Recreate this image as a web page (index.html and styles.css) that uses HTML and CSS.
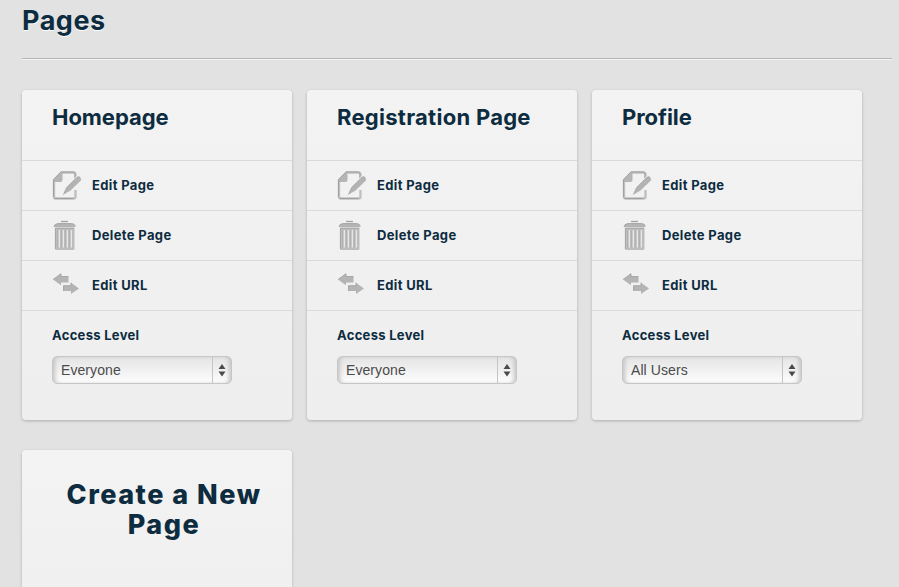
FILE: index.html
```html
<!DOCTYPE html>
<html lang="en">
<head>
<meta charset="utf-8">
<title>Pages</title>
<link rel="stylesheet" href="styles.css">
</head>
<body>
<svg class="sprite" aria-hidden="true">
  <symbol id="edit" viewBox="0 0 30 32">
    <path d="M23.500 10V4.500q0-2-2-2H9.500L2 10v16.500q0 2 2 2h17.500q2 0 2-2V20" fill="none" stroke="#c0c0c0" stroke-width="2.400"/>
    <path d="M23 9V4q0-2-2-2H9L1.500 9.500V27M2.500 28.500h19" fill="none" stroke="#a0a0a0" stroke-width="1"/>
    <path d="M9 2.500 2 9.500V12h6.500q2 0 2-2V2.500z" fill="#b5b5b5"/>
    <path d="m11.500 24.500 3.200-7L25 7.300q1.500-1.200 3.200.2 1.700 1.700.4 3.300L18.500 20.500z" fill="#b3b3b3" stroke="#f0f0f0" stroke-width="2.400" paint-order="stroke"/>
    <path d="m11.500 24.500 3.200-7L25 7.300q1.500-1.200 3.200.2" fill="none" stroke="#9d9d9d" stroke-width=".8"/>
  </symbol>
  <symbol id="trash" viewBox="0 0 30 32">
    <path d="M9 1.500h7" stroke="#a3a3a3" stroke-width="1.300"/>
    <path d="M2 7q0-3 4-3.500h13.500q4 .5 4 3.500z" fill="#b4b4b4"/>
    <path d="M2 7q0-3 4-3.500h13.500q3 .3 3.800 2" fill="none" stroke="#9f9f9f" stroke-width=".8"/>
    <path d="M3 7.800h19.500v20.700q0 1.500-1.500 1.500H4.500Q3 30 3 28.500z" fill="#bdbdbd"/>
    <path d="M3.400 29V8.200h18.700" fill="none" stroke="#a0a0a0" stroke-width=".8"/>
    <path d="M7.100 10v17.500M11.100 10v17.500M15.100 10v17.500M19.100 10v17.500" stroke="#ececec" stroke-width="1.600"/>
    <path d="M6 10v17.500M10 10v17.500M14 10v17.500M18 10v17.500" stroke="#999" stroke-width=".6"/>
  </symbol>
  <symbol id="swap" viewBox="0 0 30 32">
    <path d="m1 9.500 8-5.800V6.500h7.500v6H9v2.800zM11.500 15.700h7.500v-3l8 5.800-8 5.500v-3h-7.500z" fill="#b4b4b4"/>
    <path d="m1 9.500 8-5.800V6.500h7.500M11.500 21V15.700h7.500v-3" fill="none" stroke="#9d9d9d" stroke-width=".8"/>
  </symbol>
</svg>
<h1 class="title">Pages</h1>
<main class="grid">
  <section class="card">
    <h2 class="name">Homepage</h2>
    <a class="row"><svg class="icon"><use href="#edit"/></svg><span>Edit Page</span></a>
    <a class="row"><svg class="icon"><use href="#trash"/></svg><span>Delete Page</span></a>
    <a class="row"><svg class="icon"><use href="#swap"/></svg><span>Edit URL</span></a>
    <div class="access"><div class="label">Access Level</div><div class="select"><span class="value">Everyone</span><svg class="arrows" viewBox="0 0 18 26"><path d="m5.500 12 3.500-5 3.500 5zM5.500 14.500h7l-3.500 5z"/></svg></div></div>
  </section>
  <section class="card">
    <h2 class="name wide">Registration Page</h2>
    <a class="row"><svg class="icon"><use href="#edit"/></svg><span>Edit Page</span></a>
    <a class="row"><svg class="icon"><use href="#trash"/></svg><span>Delete Page</span></a>
    <a class="row"><svg class="icon"><use href="#swap"/></svg><span>Edit URL</span></a>
    <div class="access"><div class="label">Access Level</div><div class="select"><span class="value">Everyone</span><svg class="arrows" viewBox="0 0 18 26"><path d="m5.500 12 3.500-5 3.500 5zM5.500 14.500h7l-3.500 5z"/></svg></div></div>
  </section>
  <section class="card">
    <h2 class="name">Profile</h2>
    <a class="row"><svg class="icon"><use href="#edit"/></svg><span>Edit Page</span></a>
    <a class="row"><svg class="icon"><use href="#trash"/></svg><span>Delete Page</span></a>
    <a class="row"><svg class="icon"><use href="#swap"/></svg><span>Edit URL</span></a>
    <div class="access"><div class="label">Access Level</div><div class="select"><span class="value">All Users</span><svg class="arrows" viewBox="0 0 18 26"><path d="m5.500 12 3.500-5 3.500 5zM5.500 14.500h7l-3.500 5z"/></svg></div></div>
  </section>
  <section class="card create"><h2>Create a New Page</h2></section>
</main>
</body>
</html>
```
FILE: styles.css
```css
* { box-sizing: border-box; }
body {
  margin: 0;
  height: 587px;
  overflow: hidden;
  padding: 0 7px 0 22px;
  background: #e2e2e2;
  color: #0d2c40;
  font-family: Inter, Roboto, "Liberation Sans", sans-serif;
  font-weight: 700;
}
h1, h2 { margin: 0; }
.sprite { display: none; }
.title {
  height: 59px;
  padding-top: 3px;
  border-bottom: 1px solid #b7b7b7;
  box-shadow: 0 1px 0 #f4f4f4;
  font-size: 27px;
  line-height: 36px;
  letter-spacing: .5px;
  text-shadow: 0 1px 0 #fff;
}
.grid {
  display: grid;
  grid-template-columns: repeat(3, 270px);
  gap: 30px 15px;
  padding-top: 31px;
}
.card {
  height: 330px;
  border-radius: 4px;
  background: linear-gradient(#f3f3f3, #eee);
  box-shadow: 0 1px 3px rgba(0, 0, 0, .24);
}
.name {
  height: 70px;
  padding: 12px 0 0 30px;
  font-size: 22px;
  line-height: 30px;
  letter-spacing: -.05px;
}
.name.wide { letter-spacing: .27px; }
.row {
  display: flex;
  align-items: center;
  gap: 10px;
  height: 50px;
  padding-left: 30px;
  border-top: 1px solid #dadada;
  font-size: 13px;
  letter-spacing: .35px;
}
.row span { padding-bottom: 2px; }
.icon { width: 30px; height: 32px; }
.access {
  padding: 15px 30px 0;
  border-top: 1px solid #dadada;
}
.label {
  font-size: 13px;
  line-height: 18px;
  letter-spacing: .3px;
}
.select {
  display: flex;
  width: 180px;
  height: 28px;
  margin-top: 12px;
  border: 1px solid #c6c6c6;
  border-radius: 5px;
  background: linear-gradient(#e4e4e4, #fdfdfd);
  box-shadow: inset 4px 0 4px -2px #c4c4c4, inset -4px 0 4px -2px #c4c4c4;
  color: #4b4b4b;
  font: 14px/26px "Liberation Sans", sans-serif;
  letter-spacing: .08px;
}
.value {
  flex: 1;
  padding-left: 8px;
  border-right: 1px solid #c5c5c5;
}
.arrows {
  width: 18px;
  height: 26px;
  fill: #4b4b4b;
}
.create {
  height: 137px;
  padding: 30px 22px 0 36px;
  border-radius: 4px 4px 0 0;
  background: linear-gradient(#f3f3f3, #f0f0f0);
  text-align: center;
}
.create h2 {
  font-size: 27px;
  font-weight: 800;
  line-height: 30px;
  letter-spacing: 1.5px;
}
```
